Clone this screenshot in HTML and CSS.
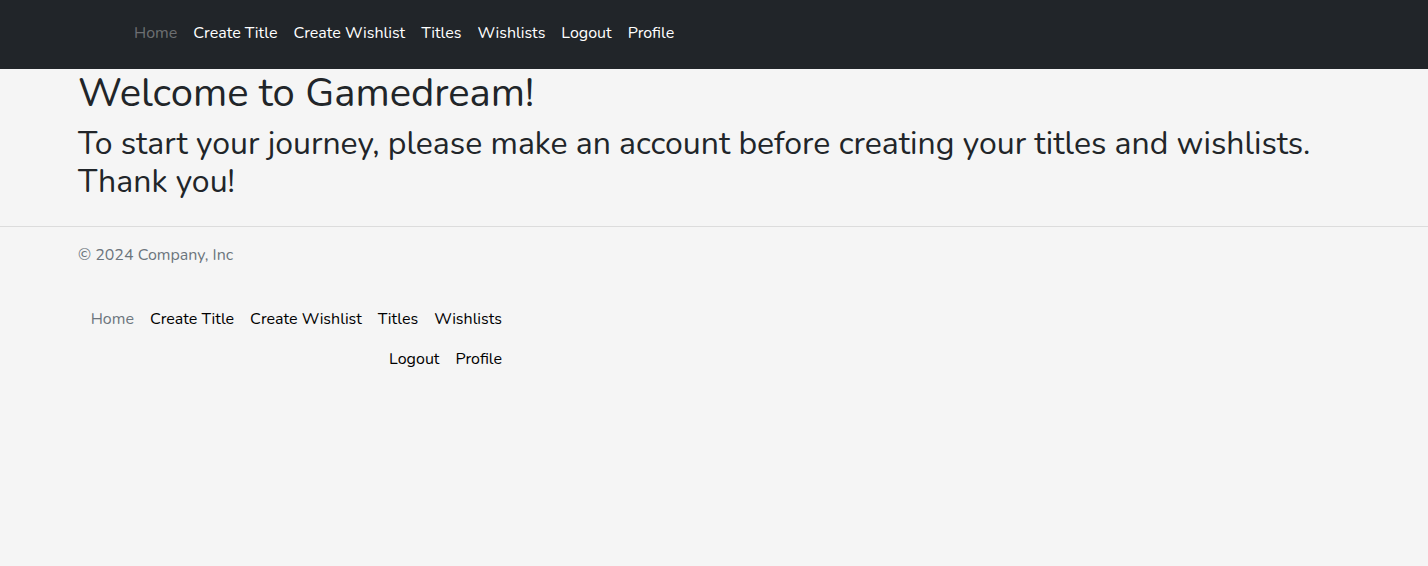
FILE: index.html
```html
<!DOCTYPE html>
<html lang="en">
<head>
<meta charset="utf-8">
<title>Gamedream</title>
<link rel="stylesheet" href="styles.css">
</head>
<body>
<header class="navbar">
  <nav class="nav-inner">
    <ul class="nav-list">
      <li><a class="nav-link active" href="#">Home</a></li>
      <li><a class="nav-link" href="#">Create Title</a></li>
      <li><a class="nav-link" href="#">Create Wishlist</a></li>
      <li><a class="nav-link" href="#">Titles</a></li>
      <li><a class="nav-link" href="#">Wishlists</a></li>
      <li><a class="nav-link" href="#">Logout</a></li>
      <li><a class="nav-link" href="#">Profile</a></li>
    </ul>
  </nav>
</header>
<main class="container main">
  <h1 class="title">Welcome to Gamedream!</h1>
  <h2 class="subtitle">To start your journey, please make an account before creating your titles and wishlists. Thank you!</h2>
</main>
<footer class="footer">
  <div class="container">
    <p class="copy">© 2024 Company, Inc</p>
    <ul class="footer-nav">
      <li><a class="foot-link active" href="#">Home</a></li>
      <li><a class="foot-link" href="#">Create Title</a></li>
      <li><a class="foot-link" href="#">Create Wishlist</a></li>
      <li><a class="foot-link" href="#">Titles</a></li>
      <li><a class="foot-link" href="#">Wishlists</a></li>
      <li><a class="foot-link" href="#">Logout</a></li>
      <li><a class="foot-link" href="#">Profile</a></li>
    </ul>
  </div>
</footer>
</body>
</html>
```

FILE: styles.css
```css
* { box-sizing: border-box; }
html, body { margin: 0; padding: 0; }
body {
  background: #f5f5f5;
  color: #212529;
  font-family: "Nunito", "Lato", "Noto Sans", sans-serif;
  font-size: 16px;
  line-height: 1.5;
}
a { text-decoration: none; }
ul { list-style: none; margin: 0; padding: 0; }

.navbar {
  background: #212529;
  height: 69px;
  display: flex;
  align-items: center;
  padding-bottom: 4px;
}
.nav-inner {
  padding-left: 126px;
}
.nav-list { display: flex; }
.nav-link {
  display: block;
  padding: 8px 8px;
  color: #ffffff;
  font-weight: 400;
}
.nav-link.active { color: rgba(255,255,255,0.35); }

.container {
  padding: 0 78px;
}
.main { padding-top: 0; padding-bottom: 24px; border-bottom: 1px solid #dcdcdc; }
.title {
  margin: 0;
  font-size: 40px;
  font-weight: 400;
  line-height: 1.2;
}
.subtitle {
  margin: 8px 0 0;
  font-size: 32px;
  font-weight: 400;
  line-height: 1.2;
}
.footer { padding-top: 16px; }
.copy { margin: 0 0 40px; color: #6c757d; }
.footer-nav {
  display: flex;
  flex-wrap: wrap;
  justify-content: flex-end;
  width: 432px;
  row-gap: 16px;
}
.foot-link { display: block; padding: 0 8px; color: #000; }
.foot-link.active { color: #6c757d; }
```
